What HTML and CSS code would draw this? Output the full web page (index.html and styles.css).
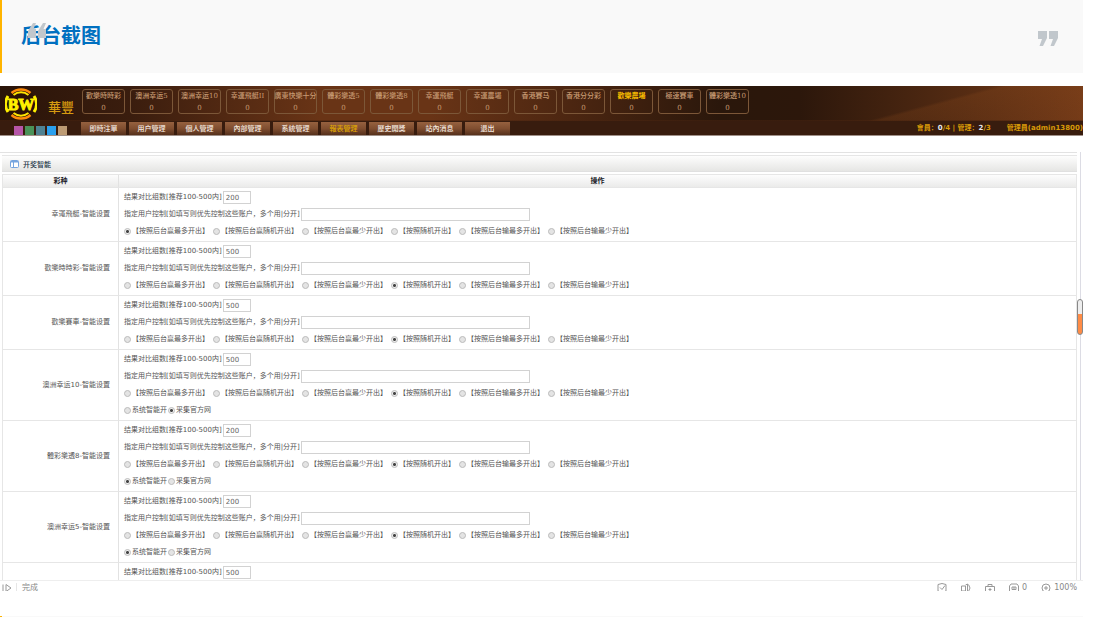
FILE: index.html
```
<!DOCTYPE html>
<html lang="zh">
<head>
<meta charset="utf-8">
<title>后台截图</title>
<link rel="stylesheet" href="styles.css">
</head>
<body>
<main class="article">
<blockquote class="quote">
  <svg class="mark mark-open" viewBox="0 0 20 15" aria-hidden="true"><path d="M6 0h3L6.500 6H9v9H1V8zM16 0h3l-2.500 6H19v9h-8V8z"/></svg>
  <h2 class="quote-title">后台截图</h2>
  <svg class="mark" viewBox="0 0 20 15" aria-hidden="true"><path d="M0 0h9v7L5 15H1.500L4 8H0zM11 0h9v7l-4 8h-3.500L15 8h-4z"/></svg>
</blockquote>

<section class="shot">
  <header class="banner">
    <div class="brand">
      <div class="brand-row">
        <svg class="logo" viewBox="0 0 32 32" role="img" aria-label="BW">
          <circle cx="16" cy="16" r="15" fill="#2a1206"/>
          <g fill="none">
            <path d="M6.500 5A14.500 14.500 0 0 1 25.500 5M6.500 27A14.500 14.500 0 0 0 25.500 27" stroke="#ff8c0a" stroke-width="2.500"/>
            <path d="M3 8A14.500 14.500 0 0 0 3 24M29 8A14.500 14.500 0 0 1 29 24" stroke="#fff000" stroke-width="3"/>
            <path d="M8.500 7A12 12 0 0 1 23.500 7M8.500 25A12 12 0 0 0 23.500 25" stroke="#ffe600" stroke-width="2"/>
          </g>
          <text x="16" y="22" text-anchor="middle" class="logo-text">BW</text>
        </svg>
        <span class="brand-name">華豐</span>
      </div>
      <div class="swatches"><i class="sw pink"></i><i class="sw green"></i><i class="sw teal"></i><i class="sw blue"></i><i class="sw tan"></i></div>
    </div>
    <div class="banner-main">
      <ul class="games" id="games"></ul>
      <div class="bar">
        <nav class="nav" id="nav"></nav>
        <p class="stats"><span>會員：<b>0</b>/4 | 管理：<b>2</b>/3</span><span>管理員(admin13800)</span></p>
      </div>
    </div>
  </header>

  <div class="pane">
    <div class="sheet">
      <div class="panel-title">
        <svg class="panel-icon" viewBox="0 0 9 8" aria-hidden="true"><rect x=".5" y=".5" width="8" height="7" rx="1" fill="#fff" stroke="#76a5df"/><path d="M1 1h7v1.500H1z" fill="#76a5df"/><path d="M3.500 2v5" stroke="#76a5df"/></svg>
        开奖智能
      </div>
      <table class="grid">
        <thead><tr><th class="col-name">彩种</th><th>操作</th></tr></thead>
        <tbody id="rows"></tbody>
      </table>
    </div>
    <div class="scroll"><div class="thumb"></div></div>
  </div>

  <footer class="status">
    <svg class="play" viewBox="0 0 10 9" aria-hidden="true"><path d="M1 1v7M4 1v7l5-3.500z"/></svg>
    <span class="done">完成</span>
    <span class="tools">
      <svg viewBox="0 0 10 10" aria-hidden="true"><path d="M1 1.500L5 .5l4 1V8L5 9.500 1 8zM3 4.500l2 2 3-4"/></svg>
      <svg viewBox="0 0 10 10" aria-hidden="true"><path d="M.5 3h4v5h-4zM4.500 2l2-1v8l-2-1M7.500 1.500q3 3.500 0 7"/></svg>
      <svg viewBox="0 0 10 10" aria-hidden="true"><path d="M.5 3.500h9v6h-9zM3 3.500v-2h4v2M5 5v3M3.500 6.500h3"/></svg>
      <span class="tool"><svg viewBox="0 0 10 10" aria-hidden="true"><path d="M2 1h6l1.500 2v6H.5V3zM3 4h4v2.500H3zM5 4v2.500"/></svg>0</span>
      <span class="tool"><svg viewBox="0 0 10 10" aria-hidden="true"><circle cx="5" cy="5" r="4"/><path d="M3 5h4M5 3v4"/></svg>100%</span>
    </span>
  </footer>
</section>
<div class="quote-next"></div>
</main>
<script src="app.js"></script>
</body>
</html>
```
FILE: styles.css
```
* { box-sizing: border-box; }
body {
  margin: 0;
  background: #fff;
  font-family: "DejaVu Sans", "Noto Sans CJK SC", sans-serif;
  font-size: 7px;
  color: #555;
  overflow: hidden;
}
.article { margin-right: 13px; }

.quote {
  position: relative;
  display: flex;
  align-items: center;
  justify-content: space-between;
  margin: 0 0 13px;
  padding: 17px 25px 20px 19px;
  border-left: 2px solid #ffb400;
  background: #f9f9f9;
}
.quote-title {
  margin: 0;
  font: bold 20px/36px "Noto Sans CJK SC", sans-serif;
  color: #0070c0;
}
.mark { width: 20px; height: 15px; margin-top: 6px; fill: #c1c7cc; }
.mark-open { position: absolute; left: 25px; top: 23px; margin: 0; }
.quote-next { height: 20px; margin-top: 25px; border-left: 2px solid #ffb400; background: #f9f9f9; }

.banner {
  display: flex;
  height: 50px;
  background:
    linear-gradient(0deg, #a09088 1px, #381c0e 1px, #381c0e 15px, #4a2410 15px, transparent 16px),
    linear-gradient(165deg, transparent 50%, rgba(150, 80, 30, .2) 52%, transparent 90%) right / 360px 50px no-repeat,
    linear-gradient(90deg, #2a1409 0, #3a1d0e 130px, #693416 320px, #693416 430px, #4c2611 570px, #2a170b 720px, #2c170b 800px, #4c2711 930px, #753b18 100%);
}
.brand { width: 81px; flex: none; padding: 2px 0 0 5px; }
.brand-row { display: flex; gap: 11px; height: 38px; }
.logo { width: 32px; height: 32px; }
.logo-text { font: bold 16px "Liberation Serif", serif; fill: #fff000; stroke: #fff000; stroke-width: 1px; }
.brand-name { font: 500 13px/40px "Liberation Serif", "Noto Sans CJK TC", serif; color: #d69a10; }
.swatches { display: flex; gap: 2px; padding-left: 9px; }
.sw { width: 9px; height: 9px; }
.pink { background: #b655a8; }
.green { background: #4a9258; }
.teal { background: #4f8293; }
.blue { background: #2ba0ee; }
.tan { background: #bd9b74; }
.banner-main { flex: 1; min-width: 0; }
.games {
  display: flex;
  gap: 5px;
  height: 35px;
  margin: 0;
  padding: 3px 0 7px 1px;
  list-style: none;
}
.game {
  width: 43px;
  flex: none;
  display: flex;
  flex-direction: column;
  align-items: center;
  border: 1px solid #7c5738;
  border-radius: 3px;
  font: 500 7px/12px "DejaVu Serif", "Noto Sans CJK TC", serif;
  color: #c79a72;
  white-space: nowrap;
}
.game.hot .game-name { color: #ffc000; font-weight: bold; }
.bar { display: flex; justify-content: space-between; align-items: center; height: 14px; }
.nav { display: flex; gap: 3px; }
.nav-btn {
  width: 45px;
  height: 13px;
  padding: 0;
  border: 0;
  background: linear-gradient(#96613f, #804e30 50%, #55301b);
  font: 500 7px/13px "Noto Sans CJK TC", sans-serif;
  color: #f4e9e0;
}
.nav-btn.active { color: #e0a800; }
.stats { display: flex; gap: 16px; margin: 0; font: bold 7px/13px "DejaVu Sans", "Noto Sans CJK TC", sans-serif; color: #d99a08; white-space: nowrap; }
.stats b { color: #e8e8f0; }

.pane { display: flex; height: 445px; padding-top: 16px; border-bottom: 1px solid #eee; overflow: hidden; }
.sheet { flex: 1; min-width: 0; padding: 2px 0 0 2px; border-top: 1px solid #e2e2e2; }
.panel-title {
  display: flex;
  align-items: center;
  gap: 4px;
  height: 17px;
  margin-bottom: 2px;
  padding-left: 8px;
  border-top: 1px solid #e6e6e6;
  border-bottom: 1px solid #e0e0e0;
  background: linear-gradient(#fdfdfd, #e6e6e4);
  font-weight: 500;
  color: #234;
}
.panel-icon { width: 9px; height: 8px; }
.grid { width: 100%; border-collapse: separate; border-spacing: 0; table-layout: fixed; border: 1px solid #e6e6e6; border-width: 1px 1px 0; }
.grid th { height: 13px; padding: 0; border-bottom: 1px solid #e6e6e6; background: linear-gradient(#fdfdfd, #ebebea); font-size: 7px; line-height: 12px; color: #211a28; }
.grid .col-name { width: 116px; border-right: 1px solid #e2e2e2; }
.grid td { padding: 1px 0 1px 5px; border-bottom: 1px solid #e6e6e6; line-height: 17px; white-space: nowrap; }
.grid .name { padding-right: 8px; border-right: 1px solid #e2e2e2; text-align: right; }
.line { display: flex; align-items: center; gap: 1px; height: 17px; }
.box { height: 13px; padding: 0 2px; border: 1px solid #d2d2d2; background: #fff; font: 7px/11px "DejaVu Sans", sans-serif; color: #666; }
.count { width: 28px; }
.users { width: 229px; }
.modes { display: grid; grid-template-columns: 89px 89px 89px 68px 89px 89px; height: 17px; }
.opt { display: flex; align-items: center; gap: 1px; }
.opt input {
  appearance: none;
  width: 7px;
  height: 7px;
  margin: 0;
  flex: none;
  border: 1px solid #bbb;
  border-radius: 50%;
  background: #e4e4e4;
}
.opt input:checked { background: radial-gradient(circle, #444 0, #444 1px, #eee 2px); }

.scroll { position: relative; width: 6px; flex: none; }
.scroll::before { content: ""; position: absolute; top: 0; bottom: 0; left: 3px; width: 1px; background: #dcdce4; }
.thumb {
  position: absolute;
  top: 147px;
  left: 0;
  width: 6px;
  height: 36px;
  border: 1px solid #888;
  border-radius: 3px;
  background: linear-gradient(#eee 14px, #ff8c46 14px);
}

.status { display: flex; align-items: center; height: 10px; padding: 4px 6px 0 2px; overflow: hidden; font-size: 8px; line-height: 10px; color: #888; }
.status svg { width: 10px; height: 10px; flex: none; fill: none; stroke: #999; stroke-width: 1; }
.done { margin-left: 4px; padding-left: 5px; border-left: 1px solid #e6e6e6; }
.tools { display: flex; align-items: center; gap: 14px; margin-left: auto; }
.tool { display: flex; align-items: center; gap: 3px; }
```
FILE: app.js
```
const games = ["歡樂時時彩", "澳洲幸运5", "澳洲幸运10", "幸運飛艇II", "廣東快樂十分", "體彩樂透5", "體彩樂透8", "幸運飛艇", "幸運農場", "香港賽马", "香港分分彩", "歡樂農場", "極速賽車", "體彩樂透10"];
document.getElementById("games").innerHTML = games.map(g =>
  `<li class="game${g === "歡樂農場" ? " hot" : ""}"><span class="game-name">${g}</span><span>0</span></li>`).join("");

const menu = ["即時注單", "用戶管理", "個人管理", "內部管理", "系統管理", "報表管理", "歷史開獎", "站內消息", "退出"];
document.getElementById("nav").innerHTML = menu.map(m =>
  `<button type="button" class="nav-btn${m === "報表管理" ? " active" : ""}">${m}</button>`).join("");

const modes = ["赢最多开出", "赢随机开出", "赢最少开出", "", "输最多开出", "输最少开出"]
  .map(m => m ? `【按照后台${m}】` : "【按照随机开出】");
const sources = ["系统智能开", "采集官方网"];
const rows = [
  ["幸運飛艇", 200, 0],
  ["歡樂時時彩", 500, 3],
  ["歡樂賽車", 500, 3],
  ["澳洲幸运10", 500, 3, 1],
  ["體彩樂透8", 200, 3, 0],
  ["澳洲幸运5", 200, 3, 0],
  ["", 500]
];
const radios = (list, name, picked) => list.map((t, i) =>
  `<label class="opt"><input type="radio" name="${name}"${i === picked ? " checked" : ""}>${t}</label>`).join("");

document.getElementById("rows").innerHTML = rows.map(([name, count, mode, source], r) => `
<tr><td class="name">${name ? name + "-智能设置" : ""}</td><td>
<div class="line"><label for="count${r}">结果对比组数[推荐100-500内]</label><input class="box count" id="count${r}" value="${count}"></div>
${mode === undefined ? "" : `<div class="line"><label for="users${r}">指定用户控制[如填写则优先控制这些账户，多个用|分开]</label><input class="box users" id="users${r}"></div>
<div class="modes">${radios(modes, "mode" + r, mode)}</div>`}
${source === undefined ? "" : `<div class="line">${radios(sources, "source" + r, source)}</div>`}
</td></tr>`).join("");
```
